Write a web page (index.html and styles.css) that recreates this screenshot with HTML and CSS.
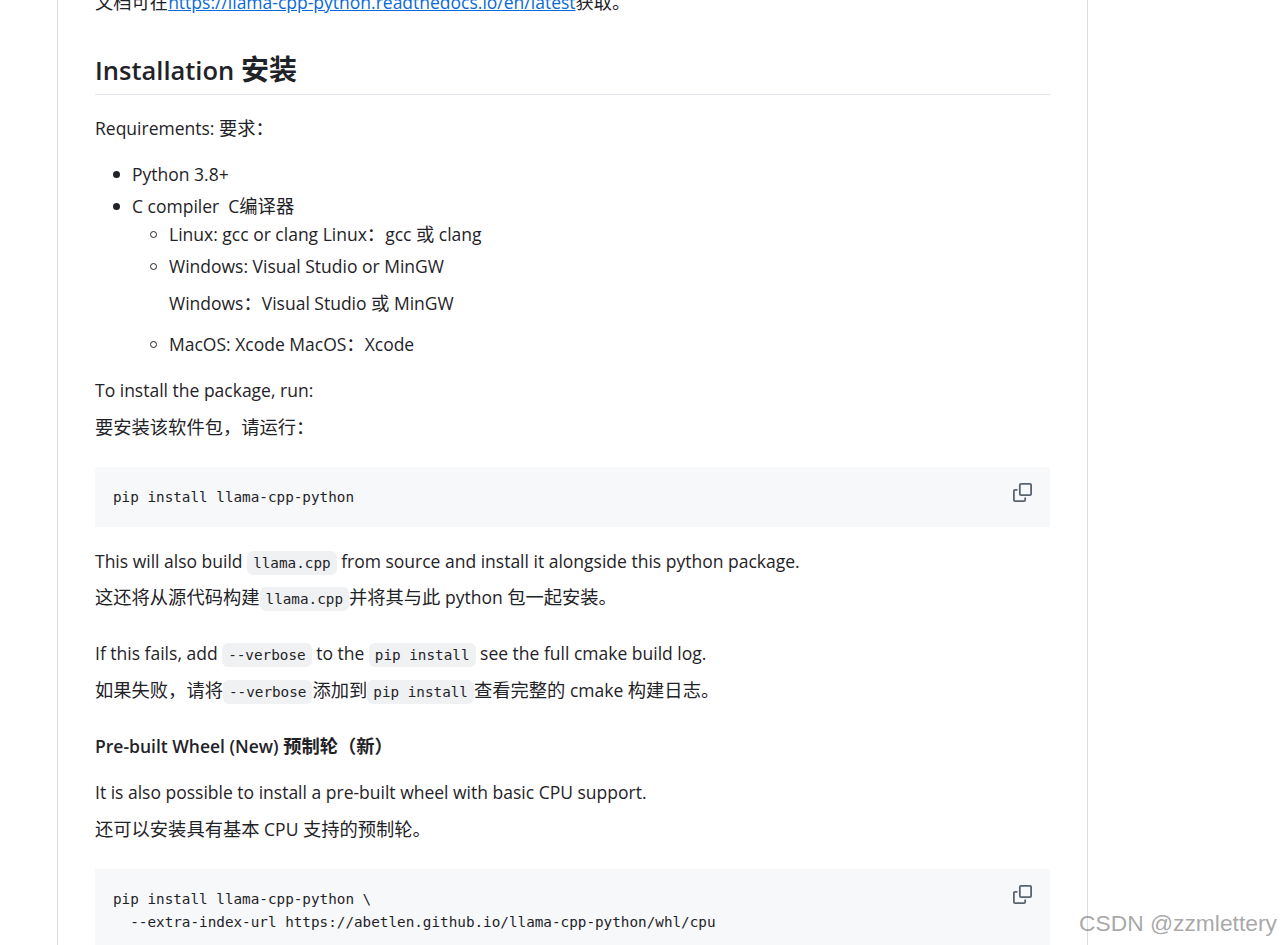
FILE: index.html
```html
<!DOCTYPE html>
<html lang="zh">
<head>
<meta charset="utf-8">
<title>Installation</title>
<link rel="stylesheet" href="styles.css">
</head>
<body>
<main class="article">
  <p class="clipped"><span class="zh">文档可在</span><a href="#">https://llama-cpp-python.readthedocs.io/en/latest</a><span class="zh">获取。</span></p>
  <h2>Installation <span class="zh">安装</span></h2>
  <p>Requirements: <span class="zh">要求：</span></p>
  <ul>
    <li>Python 3.8+</li>
    <li>C compiler&nbsp; C<span class="zh">编译器</span>
      <ul class="sub">
        <li>Linux: gcc or clang Linux<span class="zh">：</span>gcc <span class="zh">或</span> clang</li>
        <li><p class="tight">Windows: Visual Studio or MinGW</p><p class="last">Windows<span class="zh">：</span>Visual Studio <span class="zh">或</span> MinGW</p></li>
        <li>MacOS: Xcode MacOS<span class="zh">：</span>Xcode</li>
      </ul>
    </li>
  </ul>
  <p class="tight">To install the package, run:</p>
  <p class="before-code"><span class="zh">要安装该软件包，请运行：</span></p>
  <div class="code"><pre>pip install llama-cpp-python</pre><svg class="copy" viewBox="0 0 16 16" width="19" height="19" aria-hidden="true"><path d="M0 6.75C0 5.784.784 5 1.75 5h1.5a.75.75 0 0 1 0 1.5h-1.5a.25.25 0 0 0-.25.25v7.5c0 .138.112.25.25.25h7.5a.25.25 0 0 0 .25-.25v-1.5a.75.75 0 0 1 1.5 0v1.5A1.75 1.75 0 0 1 9.25 16h-7.5A1.75 1.75 0 0 1 0 14.25Z"/><path d="M5 1.75C5 .784 5.784 0 6.75 0h7.5C15.216 0 16 .784 16 1.75v7.5A1.75 1.75 0 0 1 14.25 11h-7.5A1.75 1.75 0 0 1 5 9.25Zm1.75-.25a.25.25 0 0 0-.25.25v7.5c0 .138.112.25.25.25h7.5a.25.25 0 0 0 .25-.25v-7.5a.25.25 0 0 0-.25-.25Z"/></svg></div>
  <p class="tighter">This will also build <code>llama.cpp</code> from source and install it alongside this python package.</p>
  <p class="gap"><span class="zh">这还将从源代码构建</span><code>llama.cpp</code><span class="zh">并将其与此</span> python <span class="zh">包一起安装。</span></p>
  <p class="tight">If this fails, add <code>--verbose</code> to the <code>pip install</code> see the full cmake build log.</p>
  <p class="gap"><span class="zh">如果失败，请将</span><code>--verbose</code><span class="zh">添加到</span><code>pip install</code><span class="zh">查看完整的</span> cmake <span class="zh">构建日志。</span></p>
  <h4>Pre-built Wheel (New) <span class="zh">预制轮（新）</span></h4>
  <p class="tight">It is also possible to install a pre-built wheel with basic CPU support.</p>
  <p class="before-code"><span class="zh">还可以安装具有基本</span> CPU <span class="zh">支持的预制轮。</span></p>
  <div class="code"><pre>pip install llama-cpp-python \
  --extra-index-url https://abetlen.github.io/llama-cpp-python/whl/cpu</pre><svg class="copy" viewBox="0 0 16 16" width="19" height="19" aria-hidden="true"><path d="M0 6.75C0 5.784.784 5 1.75 5h1.5a.75.75 0 0 1 0 1.5h-1.5a.25.25 0 0 0-.25.25v7.5c0 .138.112.25.25.25h7.5a.25.25 0 0 0 .25-.25v-1.5a.75.75 0 0 1 1.5 0v1.5A1.75 1.75 0 0 1 9.25 16h-7.5A1.75 1.75 0 0 1 0 14.25Z"/><path d="M5 1.75C5 .784 5.784 0 6.75 0h7.5C15.216 0 16 .784 16 1.75v7.5A1.75 1.75 0 0 1 14.25 11h-7.5A1.75 1.75 0 0 1 5 9.25Zm1.75-.25a.25.25 0 0 0-.25.25v7.5c0 .138.112.25.25.25h7.5a.25.25 0 0 0 .25-.25v-7.5a.25.25 0 0 0-.25-.25Z"/></svg></div>
</main>
<div class="watermark">CSDN @zzmlettery</div>
</body>
</html>
```
FILE: styles.css
```css
html, body {
  margin: 0;
  height: 945px;
  overflow: hidden;
  background: #fff;
}
body {
  font-family: "Open Sans", "Noto Sans CJK SC", sans-serif;
  font-size: 17.5px;
  line-height: 27px;
  color: #1f2328;
}
.zh {
  font-family: "Noto Sans CJK SC", sans-serif;
  font-size: 18.3px;
  line-height: 1;
}
.article {
  box-sizing: border-box;
  width: 1031px;
  height: 945px;
  margin-left: 57px;
  padding: 0 37px;
  border-left: 1px solid #d8dee4;
  border-right: 1px solid #d8dee4;
  overflow: hidden;
}
p { margin: 0 0 19px; }
p.clipped { margin: -11px 0 0; }
p.tight { margin-bottom: 10px; }
p.tighter { margin-bottom: 9px; }
p.last { margin-bottom: 0; }
p.gap { margin-bottom: 29px; }
p.before-code { margin-bottom: 26px; }
a { color: #0969da; text-decoration: underline; }
h2 {
  margin: 34px 0 20px;
  padding-bottom: 4px;
  font-size: 25.5px;
  line-height: 40px;
  font-weight: 600;
  border-bottom: 1px solid #e2e6ea;
}
h2 .zh { font-size: 28px; font-weight: 700; }
h4 {
  margin: 29px 0 19px;
  font-size: 17.5px;
  font-weight: 600;
}
h4 .zh { font-weight: 700; }
ul { margin: 0 0 19px; padding-left: 37px; list-style: none; }
ul.sub { margin: 1px 0 0; }
li { position: relative; margin-bottom: 5px; }
li::before {
  content: "";
  position: absolute;
  left: -19px;
  top: 10px;
  width: 7px;
  height: 7px;
  border-radius: 50%;
  background: #1f2328;
}
ul.sub li::before {
  box-sizing: border-box;
  background: transparent;
  border: 1px solid #1f2328;
}
ul.sub li:last-child, ul > li:last-child { margin-bottom: 0; }
ul.sub > li:nth-child(2) { margin-bottom: 14px; }
.code {
  display: flex;
  justify-content: space-between;
  align-items: flex-start;
  margin-bottom: 21px;
  padding: 19px 18px 18px;
  background: #f6f8fa;
}
pre {
  margin: 0;
  font-family: "DejaVu Sans Mono", monospace;
  font-size: 14.3px;
  line-height: 23px;
  color: #1f2328;
}
.copy { fill: #59636e; flex: none; margin: -3px 0 0 0; }
code {
  padding: 4px 6px;
  border-radius: 6px;
  background: #eff1f3;
  font-family: "DejaVu Sans Mono", monospace;
  font-size: 14.3px;
  line-height: 1;
}
.watermark {
  position: absolute;
  left: 1079px;
  top: 908px;
  font-family: "Liberation Sans", sans-serif;
  font-size: 22.8px;
  line-height: 30px;
  color: rgba(130, 130, 130, 0.7);
}
```
